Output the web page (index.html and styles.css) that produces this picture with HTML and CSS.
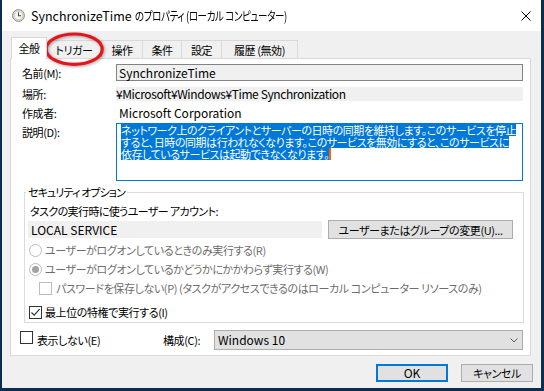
FILE: index.html
```html
<!DOCTYPE html>
<html lang="ja">
<head>
  <meta charset="UTF-8">
  <meta name="viewport" content="width=device-width, initial-scale=1.0">
  <title>SynchronizeTime のプロパティ (ローカル コンピューター)</title>
  <link rel="stylesheet" href="styles.css">
</head>
<body>

  <div class="window">
    <div class="titlebar">
      <svg class="app-icon" viewBox="0 0 14 14">
        <circle cx="7" cy="7" r="6.4" fill="#d9d9d9" stroke="#8c8c8c" stroke-width="1"/>
        <circle cx="7" cy="7" r="4.6" fill="#fbf6e4" stroke="#b4b4b4" stroke-width="0.6"/>
        <path d="M7 3.6V7.2H9.8" fill="none" stroke="#4a4a4a" stroke-width="1.1"/>
      </svg>
      <span class="title">SynchronizeTime <span class="title-ja">のプロパティ (ローカル コンピューター)</span></span>
      <svg class="close" viewBox="0 0 10 10"><path d="M0.5 0.5L9.5 9.5M9.5 0.5L0.5 9.5"/></svg>
    </div>

    <div class="client">
      <div class="tabs">
        <div class="tab active">全般</div>
        <div class="tab">トリガー</div>
        <div class="tab">操作</div>
        <div class="tab">条件</div>
        <div class="tab">設定</div>
        <div class="tab">履歴 (無効)</div>
      </div>

      <div class="panel">
        <div class="field field-name">
          <span class="field-label">名前(M):</span>
          <div class="field-value edit latin">SynchronizeTime</div>
        </div>
        <div class="field field-path">
          <span class="field-label">場所:</span>
          <div class="field-value path latin">¥Microsoft¥Windows¥Time Synchronization</div>
        </div>
        <div class="field field-author">
          <span class="field-label">作成者:</span>
          <div class="field-value plain latin">Microsoft Corporation</div>
        </div>
        <div class="field field-desc">
          <span class="field-label">説明(D):</span>
          <div class="field-value memo">
            <span class="sel">ネットワーク上のクライアントとサーバーの日時の同期を維持します。このサービスを停止</span>
            <span class="sel">すると、日時の同期は行われなくなります。このサービスを無効にすると、このサービスに</span>
            <span class="sel">依存しているサービスは起動できなくなります。<i class="caret"></i></span>
          </div>
        </div>

        <fieldset class="group">
          <legend>セキュリティ オプション</legend>
          <div class="account-caption">タスクの実行時に使うユーザー アカウント:</div>
          <div class="account-row">
            <div class="account-name latin">LOCAL SERVICE</div>
            <button class="btn change-user">ユーザーまたはグループの変更(U)...</button>
          </div>
          <div class="option disabled"><span class="radio"></span>ユーザーがログオンしているときのみ実行する(R)</div>
          <div class="option disabled"><span class="radio checked"></span>ユーザーがログオンしているかどうかにかかわらず実行する(W)</div>
          <div class="option disabled sub"><span class="check"></span>パスワードを保存しない(P) (タスクがアクセスできるのはローカル コンピューター リソースのみ)</div>
          <div class="option elevated">
            <span class="check"><svg viewBox="0 0 11 11"><path d="M1.5 5.5L4.2 8.2L9.6 2.2"/></svg></span>最上位の特権で実行する(I)
          </div>
        </fieldset>

        <div class="bottom-row">
          <div class="option hidden-opt"><span class="check"></span>表示しない(E)</div>
          <span class="config-label">構成(C):</span>
          <div class="combo">
            <span class="latin">Windows 10</span>
            <svg class="chevron" viewBox="0 0 8 5"><path d="M0.5 0.5L4 4L7.5 0.5"/></svg>
          </div>
        </div>
      </div>

      <div class="buttons">
        <button class="btn dlg default latin">OK</button>
        <button class="btn dlg">キャンセル</button>
      </div>
    </div>

    <!-- 注釈: トリガー タブを囲む赤い丸 -->
    <svg class="annotation" viewBox="0 0 70 42">
      <ellipse cx="32.2" cy="21.2" rx="28" ry="15.2"/>
    </svg>
  </div>

</body>
</html>
```

FILE: styles.css
```css
* {
  box-sizing: border-box;
}
body {
  margin: 0;
  background-color: #0c2d50;
  font-family: "Noto Sans CJK JP", sans-serif;
  font-size: 11px;
  letter-spacing: -0.4px;
  font-feature-settings: "palt";
  color: #000000;
  overflow: hidden;
}
.latin {
  font-size: 12px;
  letter-spacing: 0;
}
.window {
  position: relative;
  width: 539px;
  height: 388px;
  margin-left: 2px;
  background-color: #f0f0f0;
}
.titlebar {
  display: flex;
  align-items: center;
  height: 31px;
  padding-left: 10px;
  background-color: #ffffff;
}
.app-icon {
  width: 13px;
  height: 13px;
  margin-right: 6px;
}
.title {
  flex: 1;
  font-size: 12.5px;
  letter-spacing: 0;
  line-height: 16px;
  white-space: nowrap;
}
.title-ja {
  display: inline-block;
  transform: scaleX(0.76);
  transform-origin: left center;
  letter-spacing: -0.5px;
}
.close {
  width: 10px;
  height: 10px;
  margin-right: 10px;
  stroke: #000000;
  stroke-width: 1;
}
.client {
  padding: 6px 10px 0 8px;
}
.tabs {
  display: flex;
  align-items: flex-end;
  height: 21px;
  padding-left: 1px;
}
.tab {
  flex: none;
  height: 18px;
  padding-top: 2px;
  line-height: 14px;
  text-align: center;
  border-top: 1px solid #d9d9d9;
  border-right: 1px solid #d9d9d9;
  background-color: #f0f0f0;
  white-space: nowrap;
}
.tab:nth-child(2) { width: 55px; }
.tab:nth-child(3) { width: 41px; }
.tab:nth-child(4) { width: 39px; }
.tab:nth-child(5) { width: 40px; }
.tab:nth-child(6) { width: 76px; }
.tab.active {
  position: relative;
  z-index: 1;
  width: 36px;
  height: 22px;
  margin-bottom: -1px;
  padding-top: 3px;
  border-left: 1px solid #d9d9d9;
  background-color: #ffffff;
}
.panel {
  height: 298px;
  padding: 0 7px 0 11px;
  border: 1px solid #d9d9d9;
  background-color: #ffffff;
}

/* 上の項目 */
.field {
  display: flex;
  align-items: center;
  line-height: 14px;
}
.field-label {
  width: 94px;
  flex-shrink: 0;
}
.field-value {
  flex: 1;
  white-space: nowrap;
}
.field-name {
  margin-top: 5px;
}
.field-path {
  margin-top: 6px;
}
.field-author {
  margin-top: 3px;
}
.field-desc {
  margin-top: 2px;
  align-items: flex-start;
}
.field-desc .field-label {
  padding-top: 2px;
}
.edit {
  height: 17px;
  padding-left: 2px;
  line-height: 15px;
  border: 1px solid #838383;
  background-color: #f0f0f0;
}
.path {
  height: 14px;
  letter-spacing: -0.4px;
  background-color: #f0f0f0;
}
.plain {
  height: 17px;
  padding-left: 3px;
  line-height: 17px;
}
.memo {
  height: 58px;
  padding: 0 4px;
  border: 1px solid #0078d7;
}
.sel {
  display: block;
  width: fit-content;
  height: 12px;
  line-height: 12px;
  letter-spacing: -0.45px;
  background-color: #0078d7;
  color: #ffffff;
}
.caret {
  display: inline-block;
  width: 2px;
  height: 12px;
  vertical-align: top;
  background-color: #f7630c;
}

/* セキュリティ オプション */
.group {
  min-width: 0;
  margin: 4px -1px 0 2px;
  padding: 0 3px 2px;
  border: 1px solid #dcdcdc;
}
.group legend {
  margin-left: -2px;
  padding: 0 2px;
  line-height: 14px;
  letter-spacing: -0.9px;
}
.account-caption {
  margin: 5px 0 0 2px;
  line-height: 14px;
  letter-spacing: -0.6px;
}
.account-row {
  display: flex;
  align-items: center;
  height: 19px;
  margin-top: 2px;
}
.account-name {
  width: 294px;
  height: 17px;
  padding-left: 3px;
  line-height: 17px;
  background-color: #f0f0f0;
}
.btn {
  padding: 0;
  font: inherit;
  font-feature-settings: inherit;
  letter-spacing: inherit;
  line-height: 14px;
  color: #000000;
  background-color: #e1e1e1;
  border: 1px solid #adadad;
  white-space: nowrap;
}
.btn.latin {
  font-size: 12px;
  letter-spacing: 0;
}
.change-user {
  width: 185px;
  height: 19px;
  margin-left: 6px;
}
.option {
  display: flex;
  align-items: center;
  height: 16px;
  margin-top: 3px;
  line-height: 14px;
  white-space: nowrap;
}
.option.disabled {
  color: #6d6d6d;
}
.radio {
  display: flex;
  align-items: center;
  justify-content: center;
  width: 13px;
  height: 13px;
  margin: 0 3px 0 1px;
  border: 1px solid #bcbcbc;
  border-radius: 50%;
  background-color: #ffffff;
}
.radio.checked::after {
  content: "";
  width: 7px;
  height: 7px;
  border-radius: 50%;
  background-color: #a3a3a3;
}
.check {
  display: flex;
  align-items: center;
  justify-content: center;
  width: 13px;
  height: 13px;
  margin-right: 4px;
  border: 1px solid #333333;
  background-color: #ffffff;
}
.check svg {
  width: 11px;
  height: 11px;
  fill: none;
  stroke: #333333;
  stroke-width: 1.2;
}
.option.disabled .check {
  border-color: #bcbcbc;
}
.option.sub {
  margin-left: 11px;
}
.option.elevated {
  margin-top: 8px;
}
.option.elevated .check {
  margin: 0 3px 0 1px;
}

/* 下の行 */
.bottom-row {
  display: flex;
  align-items: center;
  height: 20px;
  margin: 7px 0 0 -2px;
  line-height: 14px;
}
.hidden-opt {
  width: 143px;
  margin-top: 0;
}
.hidden-opt .check {
  margin-bottom: 6px;
}
.config-label {
  width: 51px;
  flex-shrink: 0;
}
.combo {
  flex: 1;
  display: flex;
  align-items: center;
  justify-content: space-between;
  height: 20px;
  padding: 0 4px 0 3px;
  border: 1px solid #adadad;
  background-color: #e1e1e1;
}
.chevron {
  width: 8px;
  height: 5px;
  fill: none;
  stroke: #606060;
  stroke-width: 1;
}

.buttons {
  display: flex;
  justify-content: flex-end;
  gap: 13px;
  margin: 8px -2px 0 0;
}
.dlg {
  width: 72px;
  height: 18px;
}
.dlg.default {
  border: 2px solid #0078d7;
}

.annotation {
  position: absolute;
  left: 40px;
  top: 28px;
  width: 70px;
  height: 42px;
  overflow: visible;
  filter: drop-shadow(1px 1.5px 1.5px rgba(0, 0, 0, 0.35));
}
.annotation ellipse {
  fill: none;
  stroke: #e3161e;
  stroke-width: 3.2;
}
```
